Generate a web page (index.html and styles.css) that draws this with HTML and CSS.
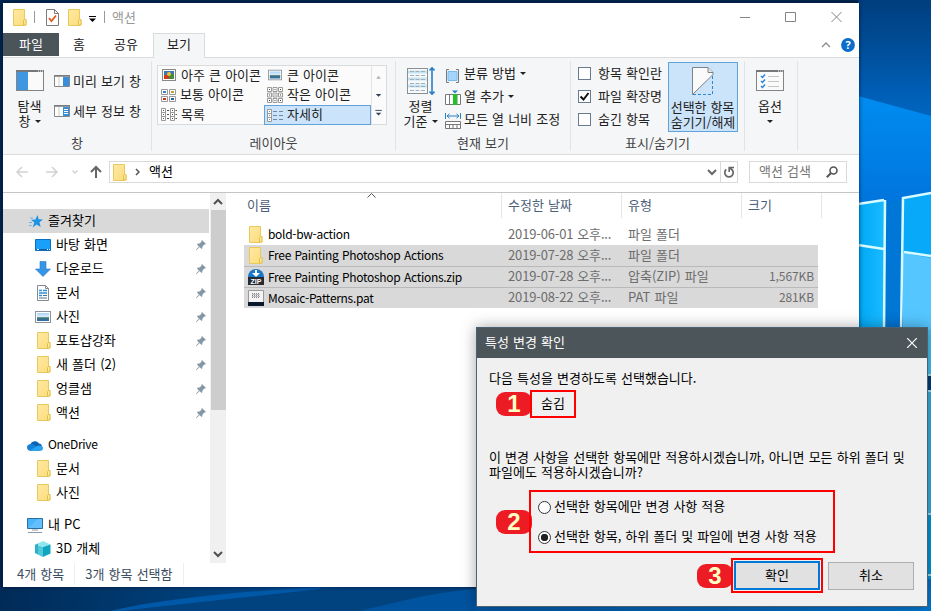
FILE: index.html
```html
<!DOCTYPE html>
<html lang="ko">
<head>
    <meta charset="UTF-8">
    <meta name="viewport" content="width=device-width, initial-scale=1.0">
    <title>액션</title>
    <link rel="stylesheet" href="styles.css">
</head>
<body>
    <!-- shared icons -->
    <svg class="sprite" width="0" height="0">
        <defs>
            <linearGradient id="fold" x1="0" y1="0" x2="1" y2="1">
                <stop offset="0" stop-color="#ffe9a2"/><stop offset="1" stop-color="#fbdc7c"/>
            </linearGradient>
            <linearGradient id="sky" x1="0" y1="0" x2="0" y2="1">
                <stop offset="0" stop-color="#a9d3f5"/><stop offset=".45" stop-color="#d9edf8"/><stop offset=".6" stop-color="#3f7477"/><stop offset="1" stop-color="#2f6fae"/>
            </linearGradient>
            <symbol id="folder" viewBox="0 0 14 17">
                <path d="M.5 .5h11v10.500h1.500v5h-1.500v.5h-11z" fill="url(#fold)" stroke="#e9c95c"/>
                <path d="M10.500 16v-4.500l1-1h1.500v5.500z" fill="#ffe79a" stroke="#e3bf45"/>
            </symbol>
            <symbol id="pin" viewBox="0 0 10 10">
                <path d="M6 0l4 4-1 .6-.6-.2-2 2 .1 1.700-.9.900-2-2L.6 10 0 9.400 3 6.400l-2-2 .9-.9 1.700.1 2-2L5.400 1z" fill="#8796a5"/>
            </symbol>
            <symbol id="caret" viewBox="0 0 6 3">
                <path d="M0 0h6L3 3z" fill="#222"/>
            </symbol>
            <symbol id="picture" viewBox="0 0 16 12">
                <rect x=".5" y=".5" width="15" height="11" fill="#fff" stroke="#8d949b"/>
                <rect x="2" y="2" width="12" height="8" fill="url(#sky)"/>
            </symbol>
        </defs>
    </svg>

    <svg class="wallpaper" viewBox="0 0 931 611" preserveAspectRatio="none">
        <defs>
            <linearGradient id="bg-right" x1="0" y1="0" x2="0" y2="1">
                <stop offset="0" stop-color="#003e7e"/><stop offset=".06" stop-color="#004a92"/>
                <stop offset=".16" stop-color="#0060b8"/><stop offset=".3" stop-color="#0078d8"/><stop offset="1" stop-color="#0070cc"/>
            </linearGradient>
            <linearGradient id="bg-bottom" x1="0" y1="0" x2="1" y2="0">
                <stop offset="0" stop-color="#002b57"/><stop offset=".15" stop-color="#003a70"/>
                <stop offset=".48" stop-color="#0057a6"/><stop offset=".8" stop-color="#0068bf"/><stop offset="1" stop-color="#0078d4"/>
            </linearGradient>
            <linearGradient id="ray" x1="0" y1="0" x2="0" y2="1">
                <stop offset="0" stop-color="#008cf0"/><stop offset="1" stop-color="#0074dc"/>
            </linearGradient>
            <linearGradient id="pane" x1="0" y1="0" x2="1" y2="0">
                <stop offset="0" stop-color="#00a8f6"/><stop offset="1" stop-color="#19baff"/>
            </linearGradient>
            <filter id="glow"><feGaussianBlur stdDeviation="1.500"/></filter>
        </defs>
        <rect width="931" height="611" fill="#00264f"/>
        <rect x="858" width="73" height="611" fill="url(#bg-right)"/>
        <path d="M858 96l73 20v80l-73 10z" fill="url(#ray)"/>
        <path d="M858 204l26-4v135h-26z" fill="url(#pane)"/>
        <path d="M903 198l28-5v142h-28z" fill="#08a9f8"/>
        <path d="M903 253l28 5v80h-28z" fill="#55c6ff"/>
        <path d="M885 200v60" stroke="#8ce6ff" stroke-width="8" filter="url(#glow)"/>
        <path d="M858 204l26-4M885 200l-1 135M858 245l26 4M901 335l2-137 28-5M904 252l27 4" fill="none" stroke="#d8fbff" stroke-width="2.500"/>
        <path d="M926 330h5v45h-5z" fill="#45c0f5"/>
        <path d="M926 375h5v16h-5z" fill="#003d7a"/>
        <path d="M926 391h5v123h-5z" fill="#39aee6"/>
        <path d="M926 514h5v65h-5z" fill="#0097dc"/>
        <path d="M927 375h4M927 391h4M927 514h4M927 575h4" stroke="#9be4f5" stroke-width="2"/>
        <rect y="587" width="931" height="24" fill="url(#bg-bottom)"/>
        <path d="M120 611l220-24h136v24z" fill="#00437f"/>
        <path d="M110 611c60-14 140-20 210-24l0 2-200 22z" fill="#0059a8"/>
        <path d="M360 611c40-10 80-20 116-22v22z" fill="#005aab" opacity=".7"/>
    </svg>

    <div class="explorer">
        <div class="titlebar">
            <svg class="icon-folder" width="14" height="17"><use href="#folder"/></svg>
            <span class="bar bar-first"></span>
            <svg class="icon-prop" width="13" height="17" viewBox="0 0 13 17">
                <path d="M.5 .5h8l4 4v12h-12z" fill="#fff" stroke="#7b7b7b"/><path d="M8.500 .5v4h4" fill="none" stroke="#7b7b7b"/>
                <path d="M3 9l2.500 3L10 6.500" fill="none" stroke="#e2571e" stroke-width="1.800"/>
            </svg>
            <svg class="icon-folder2" width="14" height="17"><use href="#folder"/></svg>
            <svg class="icon-qat" width="7" height="6" viewBox="0 0 7 6"><path d="M0 .5h7" stroke="#000"/><path d="M0 2.500h7L3.500 6z"/></svg>
            <span class="bar bar-second"></span>
            <span class="window-name">액션</span>
            <svg class="controls" width="103" height="12" viewBox="0 0 103 12" fill="none" stroke="#858585">
                <path d="M0 6.500h10M45.500 1.500h10v9h-10zM91.500 1l10 10M101.500 1l-10 10"/>
            </svg>
        </div>

        <div class="tabs">
            <span class="tab tab-file">파일</span>
            <span class="tab tab-home">홈</span>
            <span class="tab tab-share">공유</span>
            <span class="tab tab-view">보기</span>
            <svg class="ribbon-toggle" width="34" height="14" viewBox="0 0 34 14">
                <path d="M1 9l4-4 4 4" fill="none" stroke="#8c8c8c" stroke-width="1.300"/>
                <circle cx="27" cy="7" r="6.900" fill="#0b6dc9"/>
                <text x="27" y="11" text-anchor="middle" class="help-mark">?</text>
            </svg>
        </div>

        <div class="ribbon">
            <div class="group group-pane">
                <div class="group-body">
                    <div class="big-button">
                        <svg width="28" height="21" viewBox="0 0 28 21">
                            <rect x=".5" y=".5" width="27" height="20" fill="#fafafa" stroke="#848484"/>
                            <path d="M0 1h28" stroke="#777" stroke-width="2"/><path d="M22 1h1M24 1h1M26 1h1" stroke="#fff"/>
                            <rect x="1" y="2" width="11" height="18" fill="#3e97e0"/>
                        </svg>
                        <span>탐색<br>창 <svg width="6" height="3"><use href="#caret"/></svg></span>
                    </div>
                    <div class="pane-list">
                        <span><svg width="16" height="12" viewBox="0 0 16 12"><path d="M.5 .5h15v11H.5z" fill="#fff" stroke="#888"/><path d="M0 1h16" stroke="#777" stroke-width="1.500"/><path d="M5 2v9" stroke="#ccc"/><path d="M9 2h6v9H9z" fill="#3490dc"/></svg>미리 보기 창</span>
                        <span><svg width="16" height="12" viewBox="0 0 16 12"><path d="M.5 .5h15v11H.5z" fill="#fff" stroke="#888"/><path d="M0 1h16" stroke="#777" stroke-width="1.500"/><path d="M5 2v9" stroke="#ccc"/><path d="M9 2h6v9H9z" fill="#3490dc"/><path d="M10 4.500h4M10 6.500h4M10 8.500h4" stroke="#fff"/></svg>세부 정보 창</span>
                    </div>
                </div>
                <div class="group-label">창</div>
            </div>

            <div class="group group-layout">
                <div class="gallery">
                    <div class="cell"><svg width="14" height="12" viewBox="0 0 14 12"><rect x=".5" y=".5" width="13" height="11" fill="#fff" stroke="#888"/><path d="M2 2h10v8H2z" fill="#3a78b8"/><path d="M2 6h5v4H2z" fill="#d03b1e"/><path d="M7 5h5v5H7z" fill="#3f8f3a"/><circle cx="7" cy="5" r="2" fill="#f0c030"/></svg>아주 큰 아이콘</div>
                    <div class="cell"><svg width="14" height="12"><use href="#picture" width="14" height="12"/></svg>큰 아이콘</div>
                    <div class="cell"><svg width="15" height="13" viewBox="0 0 15 13"><path d="M.5 .5h6v5h-6zM8.500 .5h6v5h-6zM.5 7.500h6v5h-6zM8.500 7.500h6v5h-6z" fill="#fff" stroke="#999"/><path d="M2 3h3" stroke="#3a7fc8" stroke-width="2"/><path d="M10 3h3" stroke="#c8a030" stroke-width="2"/><path d="M2 10h3" stroke="#d0301e" stroke-width="2"/><path d="M10 10h3" stroke="#2a60b0" stroke-width="2"/></svg>보통 아이콘</div>
                    <div class="cell"><svg width="16" height="16" viewBox="0 0 16 16"><path d="M.5 .5h4v4h-4zM6 .5h4v4H6zM11.500 .5h4v4h-4zM.5 6h4v4h-4zM6 6h4v4H6zM11.500 6h4v4h-4zM.5 11.500h4v4h-4zM6 11.500h4v4H6zM11.500 11.500h4v4h-4z" fill="#fff" stroke="#999"/><path d="M2 2.500h1M7.500 2.500h1M13 2.500h1M2 8h1M7.500 8h1M13 8h1M2 13.500h1M7.500 13.500h1M13 13.500h1" stroke="#444"/></svg>작은 아이콘</div>
                    <div class="cell"><svg width="16" height="13" viewBox="0 0 16 13"><path d="M.5 .5h4v12h-4zM9.500 .5h4v12h-4zM.5 4.500h4M.5 8.500h4M9.500 4.500h4M9.500 8.500h4" fill="#fff" stroke="#999"/><path d="M2 2.500h1M2 6.500h1M2 10.500h1M6 2.500h2M6 6.500h2M6 10.500h2M11 2.500h1M11 6.500h1M11 10.500h1M14.500 2.500h1.500M14.500 6.500h1.500M14.500 10.500h1.500" stroke="#555"/></svg>목록</div>
                    <div class="cell cell-on"><svg width="16" height="13" viewBox="0 0 16 13"><path d="M.5 .5h4v12h-4zM.5 4.500h4M.5 8.500h4" fill="#fff" stroke="#999"/><path d="M2 2.500h1M2 6.500h1M2 10.500h1M6 2.500h4M6 6.500h4M6 10.500h4M12 2.500h4M12 6.500h4M12 10.500h4" stroke="#7088a0"/></svg>자세히</div>
                    <svg class="gallery-scroll" width="15" height="58" viewBox="0 0 15 58">
                        <path d="M4.500 11.500h5l-2.500-3z" fill="#a9b2bb"/><path d="M4 28h6l-3 3zM4 48h6l-3 3z" fill="#33445a"/><path d="M3.500 45.500h7" stroke="#33445a"/>
                    </svg>
                </div>
                <div class="group-label">레이아웃</div>
            </div>

            <div class="group group-current">
                <div class="group-body">
                    <div class="big-button">
                        <svg width="28" height="28" viewBox="0 0 28 28">
                            <rect x=".5" y="1.500" width="20" height="25" fill="#f6fafc" stroke="#8a8f94"/>
                            <path d="M1 5h19M1 12h19M1 19h19" stroke="#c6e3f4" stroke-width="3"/>
                            <path d="M3 4.500h15M3 8.500h15M3 12.500h15M3 16.500h15M3 19.500h15M3 23.500h15" stroke="#a3adb6" stroke-dasharray="4 1.500"/>
                            <path d="M25 2v24M22.500 3.500L25 .8l2.500 2.700M22.500 24.500l2.500 2.700 2.500-2.700" fill="none" stroke="#2a7fc6" stroke-width="1.600"/>
                        </svg>
                        <span>정렬<br>기준 <svg width="6" height="3"><use href="#caret"/></svg></span>
                    </div>
                    <div class="view-list">
                        <span><svg class="ico" width="16" height="14" viewBox="0 0 16 14"><path d="M4 .5H1.500v13H4M11 .5h2.500v13H11" fill="none" stroke="#777"/><path d="M3 2.500h9v9H3z" fill="#a5d5fa" stroke="#7ab8ea"/></svg>분류 방법 <svg width="6" height="3"><use href="#caret"/></svg></span>
                        <span><svg class="ico" width="16" height="16" viewBox="0 0 16 16"><path d="M.5 4.500h15v10H.5zM4.500 4.500v10M12 4.500v10" fill="#fff" stroke="#777"/><path d="M8 4h4v11H8z" fill="#21c321"/><path d="M7 .5h6l-3 3z" fill="#2a7fc6"/></svg>열 추가 <svg width="6" height="3"><use href="#caret"/></svg></span>
                        <span><svg class="ico" width="16" height="16" viewBox="0 0 16 16"><path d="M.5 0v6M15.500 0v6M2 3h12M4.500 .8L2 3l2.500 2.200M11.500 .8L14 3l-2.500 2.200" fill="none" stroke="#2a7fc6"/><path d="M.5 8.500h15v7H.5zM.5 11.500h15M4.500 11.500v4M8 11.500v4M12 11.500v4" fill="#fff" stroke="#777"/></svg>모든 열 너비 조정</span>
                    </div>
                </div>
                <div class="group-label">현재 보기</div>
            </div>

            <div class="group group-show">
                <div class="group-body">
                    <div class="check-list">
                        <span><i class="box"></i>항목 확인란</span>
                        <span><i class="box"><svg width="11" height="11" viewBox="0 0 11 11"><path d="M1.500 5.500l3 3L9.500 2" fill="none" stroke="#111" stroke-width="2"/></svg></i>파일 확장명</span>
                        <span><i class="box"></i>숨긴 항목</span>
                    </div>
                    <div class="hide-button">
                        <svg width="22" height="28" viewBox="0 0 22 28">
                            <path d="M.5 .5h15.500l5 5v2L.5 27.500z" fill="#fafafa" stroke="#7d8388"/><path d="M16 .5v5h5" fill="#e5e5e5" stroke="#7d8388"/>
                            <path d="M20.500 9v18.500H1" fill="none" stroke="#2a86d8" stroke-dasharray="3 2"/>
                        </svg>
                        <span>선택한 항목<br>숨기기/해제</span>
                    </div>
                </div>
                <div class="group-label">표시/숨기기</div>
            </div>

            <div class="group group-option">
                <div class="big-button">
                    <svg width="28" height="21" viewBox="0 0 28 21">
                        <rect x=".5" y=".5" width="27" height="20" fill="#fafafa" stroke="#848484"/>
                        <path d="M0 1h28" stroke="#777" stroke-width="2"/><path d="M22 1h1M24 1h1M26 1h1" stroke="#fff"/>
                        <path d="M5 6l1.500 1.500L9 4.500M5 11l1.500 1.500L9 9.500M5 16l1.500 1.500L9 14.500" fill="none" stroke="#2a86d8" stroke-width="1.500"/>
                        <path d="M12 6.500h11M12 11.500h11M12 16.500h11" stroke="#c4c4c4"/>
                    </svg>
                    <span>옵션<br><svg width="6" height="3"><use href="#caret"/></svg></span>
                </div>
            </div>
        </div>

        <div class="address">
            <svg class="nav-arrows" width="88" height="14" viewBox="0 0 88 14" fill="none">
                <path d="M13 7H2M7 2L2 7l5 5M31 7h11M37 2l5 5-5 5" stroke="#d2d2d2" stroke-width="1.500"/>
                <path d="M57.500 5.500l2.500 2.500 2.500-2.500" stroke="#cfcfcf" stroke-width="1.300"/>
                <path d="M81 13V2M76 7l5-5 5 5" stroke="#666" stroke-width="2"/>
            </svg>
            <div class="path">
                <svg width="14" height="17"><use href="#folder"/></svg>
                <svg width="5" height="8" viewBox="0 0 5 8"><path d="M1 1l3 3-3 3" fill="none" stroke="#555" stroke-width="1.500"/></svg>
                <span>액션</span>
                <svg class="path-drop" width="10" height="7" viewBox="0 0 10 7"><path d="M1 1l4 4 4-4" fill="none" stroke="#666" stroke-width="2"/></svg>
                <div class="refresh"><svg width="12" height="13" viewBox="0 0 12 13"><path d="M3.200 3.500A4.200 4.200 0 1 0 8.800 3.500L7 2" fill="none" stroke="#666" stroke-width="1.700"/><path d="M6.200 6V1.500H11" fill="none" stroke="#666" stroke-width="1.600"/></svg></div>
            </div>
            <div class="search">
                <span>액션 검색</span>
                <svg width="12" height="12" viewBox="0 0 12 12"><circle cx="7.500" cy="4.500" r="3.500" fill="none" stroke="#555" stroke-width="1.600"/><path d="M5 7L.8 11.200" stroke="#555" stroke-width="2"/></svg>
            </div>
        </div>

        <div class="content">
            <div class="tree">
                <div class="node node-root node-on"><svg width="14" height="13" viewBox="0 0 14 13"><path d="M8.500 0l1.200 4.300 4.300.2-3.500 2.700 1.200 4.800-4-2.600-4 3 1.600-4.900L2 4.800l4.400-.3z" fill="#1e93e4"/><path d="M1 3h3M0 7.500h3M0 10.500h2.500" stroke="#5db4ee"/></svg>즐겨찾기</div>
                <div class="node"><svg width="16" height="12" viewBox="0 0 16 12"><path d="M.5 .5h15v11H.5z" fill="#19a0fb" stroke="#0b6fc0"/><path d="M1 10.500h14" stroke="#0a5ea8"/><path d="M2 10.500h2M12 10.500h1M14 10.500h1" stroke="#fff"/></svg>바탕 화면<svg class="pin" width="10" height="10"><use href="#pin"/></svg></div>
                <div class="node"><svg width="16" height="16" viewBox="0 0 16 16"><path d="M5 .5h6V8h4.500L8 15.500.5 8H5z" fill="#3494e6" stroke="#2a7ac8" stroke-width=".6"/></svg>다운로드<svg class="pin" width="10" height="10"><use href="#pin"/></svg></div>
                <div class="node"><svg width="16" height="16" viewBox="0 0 16 16"><path d="M2.500 .5h8l3 3v12h-11z" fill="#fff" stroke="#858b90"/><path d="M10.500 .5v3h3" fill="none" stroke="#858b90"/><path d="M4 5.500h3M8 5.500h4M4 8h8M4 10.500h3" stroke="#2f8fd6" stroke-width="1.300"/><path d="M8 10.500h4M4 13h8" stroke="#53718c"/></svg>문서<svg class="pin" width="10" height="10"><use href="#pin"/></svg></div>
                <div class="node"><svg width="16" height="12"><use href="#picture"/></svg>사진<svg class="pin" width="10" height="10"><use href="#pin"/></svg></div>
                <div class="node"><svg class="f" width="14" height="17"><use href="#folder"/></svg>포토샵강좌<svg class="pin" width="10" height="10"><use href="#pin"/></svg></div>
                <div class="node"><svg class="f" width="14" height="17"><use href="#folder"/></svg>새 폴더 (2)<svg class="pin" width="10" height="10"><use href="#pin"/></svg></div>
                <div class="node"><svg class="f" width="14" height="17"><use href="#folder"/></svg>엉클샘<svg class="pin" width="10" height="10"><use href="#pin"/></svg></div>
                <div class="node"><svg class="f" width="14" height="17"><use href="#folder"/></svg>액션<svg class="pin" width="10" height="10"><use href="#pin"/></svg></div>
                <div class="node node-root node-gap"><svg width="16" height="11" viewBox="0 0 16 11"><path d="M3.500 10.500a3 3 0 0 1-.3-6A5 5 0 0 1 12 3.500a3.600 3.600 0 0 1 .5 7z" fill="#0b63b6"/><path d="M2 10a3 3 0 0 1 0-5.500C4 3.500 6 4 7.500 5l5.500 5.500H3.500z" fill="#1580d8"/><path d="M3 10.500L10 6c3-1.500 6 0 6 2s-1.500 2.800-3 2.800H4z" fill="#2aa3ee"/></svg><span class="latin">OneDrive</span></div>
                <div class="node"><svg class="f" width="14" height="17"><use href="#folder"/></svg>문서</div>
                <div class="node"><svg class="f" width="14" height="17"><use href="#folder"/></svg>사진</div>
                <div class="node node-root node-gap"><svg width="16" height="15" viewBox="0 0 16 15"><path d="M.5 .5h15v10H.5z" fill="#4ab4fa" stroke="#2c6f9f"/><path d="M1 10L11 1h4v9z" fill="#7ccbff" opacity=".5"/><path d="M5 12h6M1 14.500h14" stroke="#8a9aa8"/></svg>내 PC</div>
                <div class="node"><svg width="16" height="16" viewBox="0 0 16 16"><path d="M8 0l7.500 3.500L8 6 .5 3.500z" fill="#8fe6f0"/><path d="M.5 3.500L8 6v10L.5 12.500z" fill="#4fc8da"/><path d="M15.500 3.500L8 6v10l7.500-3.500z" fill="#0fa5c0"/><path d="M0 4l3-1.500v10L0 12z" fill="#2bb0c8"/></svg>3D 개체</div>
            </div>
            <div class="scrollbar">
                <svg width="10" height="7" viewBox="0 0 10 7"><path d="M1 6l4-4 4 4" fill="none" stroke="#505050" stroke-width="2"/></svg>
                <div class="thumb"></div>
                <svg width="10" height="7" viewBox="0 0 10 7"><path d="M1 1l4 4 4-4" fill="none" stroke="#505050" stroke-width="2"/></svg>
            </div>
            <div class="files">
                <svg class="sort-mark" width="9" height="5" viewBox="0 0 9 5"><path d="M.5 4.500l4-4 4 4" fill="none" stroke="#555"/></svg>
                <div class="row head"><span>이름</span><span>수정한 날짜</span><span>유형</span><span>크기</span></div>
                <div class="row"><span class="name"><svg width="16" height="17"><use href="#folder"/></svg><b class="latin">bold-bw-action</b></span><span class="date">2019-06-01 오후...</span><span>파일 폴더</span><span></span></div>
                <div class="row row-on"><span class="name"><svg width="16" height="17"><use href="#folder"/></svg><b class="latin">Free Painting Photoshop Actions</b></span><span class="date">2019-07-28 오후...</span><span>파일 폴더</span><span></span></div>
                <div class="row row-on"><span class="name"><svg width="16" height="16" viewBox="0 0 16 16"><path d="M0 8a8 8 0 0 1 16 0z" fill="#1778c8"/><path d="M7 1h2v3h3L8 8 4 4h3z" fill="#fff"/><path d="M0 8h16v8H0z" fill="#262b33"/><text x="8" y="15" text-anchor="middle" class="zip-mark">ZIP</text></svg><b class="latin">Free Painting Photoshop Actions.zip</b></span><span class="date">2019-07-28 오후...</span><span>압축(ZIP) 파일</span><span class="size">1,567KB</span></div>
                <div class="row row-on"><span class="name"><svg width="16" height="16" viewBox="0 0 16 16"><path d="M.5 .5h15v15H.5z" fill="#f4f4f4" stroke="#999"/><path d="M0 12h16v4H0z" fill="#0a1a2c"/><path d="M4 3.500h8M4 5.500h8M4 7.500h8M4.500 4.500h8M4.500 6.500h8" stroke="#888" stroke-dasharray="1 1"/></svg><b class="latin">Mosaic-Patterns.pat</b></span><span class="date">2019-08-22 오후...</span><span>PAT 파일</span><span class="size">281KB</span></div>
            </div>
        </div>

        <div class="status"><span>4개 항목</span><span>3개 항목 선택함</span></div>
    </div>

    <div class="dialog">
        <div class="dialog-title">
            <span>특성 변경 확인</span>
            <svg width="10" height="10" viewBox="0 0 10 10"><path d="M0 0l10 10M10 0L0 10" stroke="#fff" stroke-width="1.200"/></svg>
        </div>
        <p class="intro">다음 특성을 변경하도록 선택했습니다.</p>
        <div class="step">
            <span class="badge">1</span>
            <div class="mark mark-attr">숨김</div>
        </div>
        <p class="question">이 변경 사항을 선택한 항목에만 적용하시겠습니까, 아니면 모든 하위 폴더 및<br>파일에도 적용하시겠습니까?</p>
        <div class="step">
            <span class="badge">2</span>
            <div class="mark mark-choice">
                <label><i class="radio"></i>선택한 항목에만 변경 사항 적용</label>
                <label><i class="radio radio-on"></i>선택한 항목, 하위 폴더 및 파일에 변경 사항 적용</label>
            </div>
        </div>
        <div class="step step-buttons">
            <span class="badge">3</span>
            <div class="mark mark-ok"><button class="ok">확인</button></div>
            <button class="cancel">취소</button>
        </div>
    </div>
</body>
</html>
```

FILE: styles.css
```css
* {
    box-sizing: border-box;
}
body {
    margin: 0;
    width: 931px;
    height: 611px;
    position: relative;
    overflow: hidden;
    font-family: "Noto Sans CJK KR", sans-serif;
    font-size: 13px;
    line-height: 16px;
    word-spacing: 0.5px;
    color: #222;
    white-space: nowrap;
}
svg {
    flex: none;
}
.sprite {
    position: absolute;
}
.wallpaper {
    display: block;
    width: 931px;
    height: 611px;
}
.latin {
    font-size: 12px;
    letter-spacing: -0.3px;
}

/* explorer window */
.explorer {
    position: absolute;
    left: 3px;
    top: 3px;
    width: 856px;
    height: 584px;
    background: #fff;
    display: flex;
    flex-direction: column;
    box-shadow: 0 0 4px rgba(0, 10, 40, 0.7);
}
.titlebar {
    height: 30px;
    display: flex;
    align-items: center;
    padding: 0 16px 2px 10px;
    color: #999;
}
.bar {
    width: 1px;
    height: 12px;
    background: #999;
}
.bar-first {
    margin: 0 11px 0 7px;
}
.icon-folder2 {
    margin: 0 7px 0 9px;
}
.icon-qat {
    margin-top: 3px;
}
.bar-second {
    margin: 0 7px 0 8px;
}
.controls {
    margin-left: auto;
}
.tabs {
    height: 25px;
    display: flex;
    border-bottom: 1px solid #dadbdc;
}
.tab {
    line-height: 21px;
    text-align: center;
}
.tab-file {
    width: 56px;
    height: 23px;
    background: #4a5459;
    color: #fff;
}
.tab-home {
    width: 40px;
}
.tab-share {
    width: 54px;
}
.tab-view {
    width: 52px;
    height: 25px;
    line-height: 19px;
    background: #f5f6f7;
    border: 1px solid #dadbdc;
    border-bottom: none;
}
.ribbon-toggle {
    margin: 5px 4px 0 auto;
}
.help-mark {
    font: bold 11px "Open Sans", sans-serif;
    fill: #fff;
}

/* ribbon */
.ribbon {
    height: 97px;
    display: flex;
    padding: 3px 0;
    background: #f5f6f7;
    border-bottom: 1px solid #dadbdc;
}
.group {
    display: flex;
    flex-direction: column;
    border-right: 1px solid #e2e3e4;
}
.group-pane {
    width: 149px;
}
.group-layout {
    width: 244px;
}
.group-current {
    width: 175px;
}
.group-show {
    width: 174px;
}
.group-option {
    width: 53px;
}
.group-body {
    display: flex;
    flex: 1;
}
.group-label {
    margin-top: auto;
    text-align: center;
    color: #444;
}
.big-button {
    width: 53px;
    padding-top: 9px;
    display: flex;
    flex-direction: column;
    align-items: center;
    text-align: center;
}
.big-button span {
    margin-top: 7px;
    line-height: 15px;
}
.group-option .big-button {
    width: 50px;
}
.big-button span svg,
.view-list svg:not(.ico) {
    vertical-align: 3px;
}
.pane-list {
    padding-top: 5px;
}
.pane-list span {
    height: 30px;
    display: flex;
    align-items: center;
    gap: 3px;
    margin-left: -2px;
}
.gallery {
    width: 230px;
    height: 60px;
    margin: 4px 0 0 5px;
    border: 1px solid #dadbdc;
    background: #fbfbfc;
    display: grid;
    grid-template-columns: 106px 107px 15px;
    grid-template-rows: 19px 20px 19px;
}
.cell {
    display: flex;
    align-items: center;
    padding: 0 0 2px 2px;
    line-height: 16px;
}
.cell svg {
    margin: 2px 3px 0 1px;
}
.cell svg[width="14"] {
    margin: 0 5px 0 2px;
}
.cell svg[width="15"] {
    margin-right: 4px;
}
.cell svg[width="16"] {
    margin-right: 4px;
}
.cell-on {
    background: #cce4fb;
    outline: 1px solid #62a2da;
    outline-offset: -1px;
    height: 20px;
}
.gallery-scroll {
    grid-column: 3;
    grid-row: 1 / 4;
    border-left: 1px solid #e4e4e4;
}
.group-current .big-button {
    width: 49px;
    padding-top: 6px;
}
.group-current .big-button span {
    margin-top: 3px;
}
.view-list span,
.check-list span {
    height: 23px;
    display: block;
    line-height: 23px;
}
.ico {
    vertical-align: -5px;
    margin-right: 3px;
}
.check-list {
    width: 97px;
    padding-left: 7px;
}
.check-list span {
    display: flex;
    align-items: center;
    overflow: hidden;
    width: 85px;
}
.box {
    width: 13px;
    height: 13px;
    flex: none;
    margin: 2px 7px 0 0;
    border: 1px solid #6a7b8e;
    background: #fff;
    display: flex;
}
.hide-button {
    width: 70px;
    height: 70px;
    margin-top: 1px;
    padding-top: 4px;
    background: #cce4f9;
    border: 1px solid #62a2da;
    display: flex;
    flex-direction: column;
    align-items: center;
}
.hide-button span {
    margin-top: 4px;
    line-height: 15px;
    letter-spacing: -0.1px;
}

/* address bar */
.address {
    height: 38px;
    display: flex;
    align-items: flex-start;
    padding: 6px 12px 0 12px;
    border-bottom: 1px solid #c5c5c5;
}
.nav-arrows {
    margin: 4px 6px 0 0;
}
.path {
    width: 629px;
    height: 22px;
    border: 1px solid #d9d9d9;
    display: flex;
    align-items: center;
    color: #000;
    padding-left: 3px;
}
.path span,
.search span {
    margin-bottom: 2px;
}
.path svg:nth-child(2) {
    margin: 0 9px 0 8px;
}
.path .path-drop {
    margin: 0 3px 0 auto;
}
.refresh {
    width: 17px;
    height: 20px;
    border-left: 1px solid #d9d9d9;
    display: flex;
    align-items: center;
    justify-content: center;
}
.search {
    width: 98px;
    height: 22px;
    margin-left: auto;
    border: 1px solid #d9d9d9;
    display: flex;
    align-items: center;
    justify-content: space-between;
    padding: 0 8px 0 9px;
    color: #777;
}

/* navigation tree */
.content {
    height: 370px;
    display: flex;
}
.tree {
    width: 206px;
    padding-top: 16px;
    color: #000;
}
.node {
    height: 24px;
    display: flex;
    align-items: center;
    padding: 0 3px 2px 32px;
}
.node svg:first-child {
    margin: 2px 5px 0 0;
}
.node svg.f:first-child {
    margin: 1px 5px 0 2px;
}
.node-root {
    padding-left: 24px;
}
.node-on {
    background: #d9d9d9;
    padding-left: 26px;
}
.node-gap {
    margin-top: 8px;
}
.pin {
    margin: 2px 0 0 auto;
}
.scrollbar {
    width: 16px;
    margin-left: 1px;
    background: #f0f0f0;
    display: flex;
    flex-direction: column;
    align-items: center;
    padding: 5px 0;
}
.thumb {
    width: 15px;
    height: 200px;
    margin: 5px 0 auto;
    background: #cdcdcd;
}

/* file list */
.files {
    width: 577px;
    margin-left: 18px;
    position: relative;
}
.sort-mark {
    position: absolute;
    left: 123px;
    top: 0;
}
.row {
    width: 574px;
    height: 21px;
    display: grid;
    grid-template-columns: 257px 120px 120px 77px;
    align-items: center;
    color: #6d6d6d;
}
.row span {
    padding: 0 0 2px 7px;
}
.row span:last-child {
    padding-right: 4px;
    text-align: right;
}
.row .date {
    letter-spacing: -0.15px;
}
.row .size {
    font-size: 12px;
    letter-spacing: -0.1px;
}
.head {
    width: 578px;
    height: 25px;
    margin-bottom: 6px;
    grid-template-columns: 258px 120px 120px 80px;
    color: #4c607a;
}
.row.head span {
    height: 25px;
    line-height: 24px;
    padding: 0 0 0 6px;
    border-right: 1px solid #e5e5e5;
    text-align: left;
}
.row.head span:first-child {
    padding-left: 3px;
}
.row .name {
    display: flex;
    align-items: center;
    padding: 0 0 0 4px;
    color: #000;
}
.name b {
    font-weight: normal;
    margin: 0 0 1px 4px;
}
.row-on {
    background: #d9d9d9;
}
.row-on + .row-on {
    border-top: 1px solid #b9b9b9;
}
.zip-mark {
    font: bold 7px "Liberation Sans", sans-serif;
    fill: #fff;
}
.status {
    height: 24px;
    display: flex;
    padding-left: 14px;
    line-height: 22px;
    color: #3b4d61;
}
.status span {
    height: 22px;
    margin-right: 10px;
    padding-right: 10px;
    border-right: 1px solid #eee;
}

/* confirm dialog */
.dialog {
    position: absolute;
    left: 476px;
    top: 327px;
    width: 452px;
    height: 280px;
    background: #f0f0f0;
    border: 1px solid #4b6070;
    box-shadow: 0 0 14px rgba(0, 0, 0, 0.35);
    color: #000;
}
.dialog p {
    margin: 0 0 0 12px;
    line-height: 15px;
}
.dialog-title {
    height: 30px;
    display: flex;
    align-items: center;
    justify-content: space-between;
    padding: 0 10px 0 8px;
    background: #4c555a;
    color: #fff;
}
.dialog-title span {
    margin-bottom: 2px;
}
.dialog .intro {
    margin-top: 12px;
    margin-bottom: 5px;
}
.dialog .question {
    margin-top: 31px;
    margin-bottom: 11px;
}
.step {
    display: flex;
    align-items: center;
    padding-left: 19px;
}
.badge {
    width: 36px;
    height: 24px;
    margin-right: -2px;
    border-radius: 9px;
    background: #ed1c24;
    color: #ffffc4;
    font: bold 24px/24px "Liberation Sans", sans-serif;
    text-align: center;
}
.mark {
    position: relative;
    border: 2px solid #f00;
}
.mark-attr {
    width: 46px;
    height: 28px;
    line-height: 22px;
    text-align: center;
}
.mark-choice {
    width: 306px;
    height: 63px;
    margin-left: -1px;
    padding-left: 7px;
}
.mark-choice label {
    height: 30px;
    display: flex;
    align-items: center;
    gap: 3px;
    padding-bottom: 2px;
    letter-spacing: -0.05px;
}
.radio {
    width: 13px;
    height: 13px;
    margin-top: 2px;
    border: 1px solid #333;
    border-radius: 50%;
    background: #fff;
}
.radio-on {
    background: radial-gradient(circle, #222 3.4px, #fff 4px);
}
.step-buttons {
    margin-top: 5px;
    padding-left: 220px;
}
.mark-ok {
    width: 92px;
    height: 35px;
    padding: 1px;
}
button {
    font: inherit;
    padding: 0 0 2px;
    background: #e1e1e1;
    border: 1px solid #adadad;
}
.ok {
    width: 86px;
    height: 29px;
    border: 2px solid #0078d7;
}
.cancel {
    width: 86px;
    height: 28px;
    margin-left: 5px;
}
```
